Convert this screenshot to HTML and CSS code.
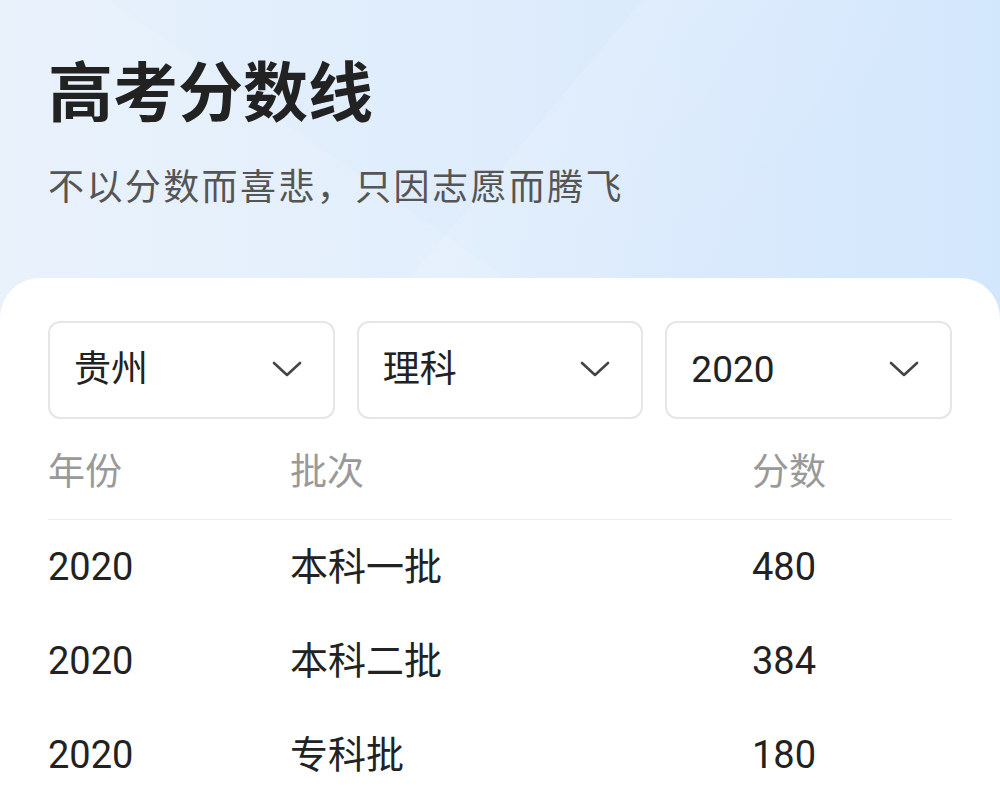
FILE: index.html
```html
<!DOCTYPE html>
<html lang="zh-CN">
<head>
  <meta charset="UTF-8" />
  <meta name="viewport" content="width=device-width, initial-scale=1.0"/>
  <title>高考分数线</title>
  <link rel="stylesheet" href="styles.css">
</head>
<body>
  <header class="hero">
    <h1>高考分数线</h1>
    <p class="slogan">不以分数而喜悲，只因志愿而腾飞</p>
  </header>

  <main class="card">
    <div class="filters">
      <div class="select"><span class="zh">贵州</span><svg class="chev" viewBox="0 0 30 16"><path d="M2 2 L15 14 L28 2" /></svg></div>
      <div class="select"><span class="zh">理科</span><svg class="chev" viewBox="0 0 30 16"><path d="M2 2 L15 14 L28 2" /></svg></div>
      <div class="select"><span>2020</span><svg class="chev" viewBox="0 0 30 16"><path d="M2 2 L15 14 L28 2" /></svg></div>
    </div>

    <div class="table">
      <div class="row head">
        <span>年份</span><span>批次</span><span>分数</span>
      </div>
      <div class="row">
        <span>2020</span><span class="zh">本科一批</span><span>480</span>
      </div>
      <div class="row">
        <span>2020</span><span class="zh">本科二批</span><span>384</span>
      </div>
      <div class="row">
        <span>2020</span><span class="zh">专科批</span><span>180</span>
      </div>
    </div>
  </main>
</body>
</html>
```

FILE: styles.css
```css
body {
  margin: 0;
  height: 798px;
  overflow: hidden;
  font-family: Roboto, "Noto Sans CJK SC", sans-serif;
  color: #222;
  background-color: #dcecfc;
  background-image:
    linear-gradient(130deg, rgba(255,255,255,0) 50%, rgba(255,255,255,0.12) 50%, rgba(255,255,255,0) 75%),
    linear-gradient(35deg, rgba(255,255,255,0.1) 40%, rgba(255,255,255,0) 40%),
    linear-gradient(90deg, #e7f1fb 0%, #dcebfc 60%, #d3e7fc 100%);
  background-repeat: no-repeat;
  background-size: 100% 340px;
}
.hero {
  padding: 56px 48px 65px;
}
h1 {
  margin: 0;
  font-size: 65px;
  line-height: 77px;
  font-weight: 700;
  color: #222;
}
.slogan {
  margin: 30px 0 0;
  font-size: 36px;
  line-height: 50px;
  letter-spacing: 2.4px;
  color: #555;
}
.card {
  background: #fff;
  border-radius: 40px 40px 0 0;
  padding: 43px 48px 0;
  height: 520px;
  box-sizing: border-box;
}
.filters {
  display: flex;
  gap: 22px;
}
.select {
  flex: 1;
  height: 98px;
  box-sizing: border-box;
  border: 2px solid #e6e6e6;
  border-radius: 12px;
  display: flex;
  align-items: center;
  justify-content: space-between;
  padding: 0 31px 2px 24px;
  font-size: 37px;
  color: #222;
}
.zh {
  padding-bottom: 7px;
}
.chev {
  width: 30px;
  height: 16px;
}
.chev path {
  fill: none;
  stroke: #444;
  stroke-width: 2.6;
  stroke-linecap: round;
  stroke-linejoin: round;
}
.row {
  display: grid;
  grid-template-columns: 242px 462px 1fr;
  align-items: center;
  height: 94px;
  font-size: 38px;
}
.row.head {
  height: 100px;
  font-size: 37px;
  color: #999;
  border-bottom: 1px solid #eeeeee;
}
```
